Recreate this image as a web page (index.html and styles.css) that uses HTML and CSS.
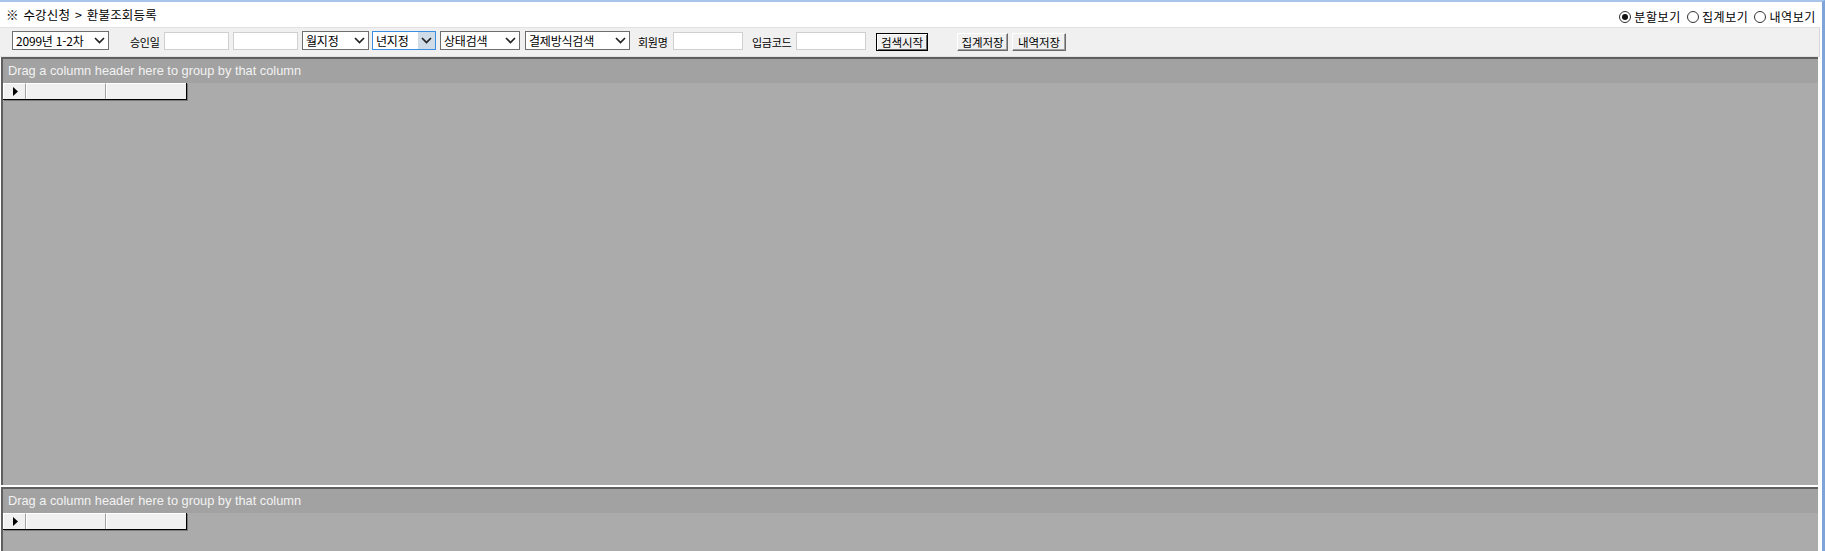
FILE: index.html
```html
<!DOCTYPE html>
<html lang="ko">
<head>
<meta charset="utf-8">
<title>환불조회등록</title>
<link rel="stylesheet" href="styles.css">
</head>
<body>
<div class="window">
  <div class="titlebar">
    <div class="title">※ 수강신청 &gt; 환불조회등록</div>
    <div class="views">
      <label class="radio"><span class="radio-circle checked"></span><span>분할보기</span></label>
      <label class="radio"><span class="radio-circle"></span><span>집계보기</span></label>
      <label class="radio"><span class="radio-circle"></span><span>내역보기</span></label>
    </div>
  </div>
  <div class="toolbar">
    <div class="sel sel-term"><span class="sel-text">2099년 1-2차</span><span class="sel-arrow"><svg width="11" height="7" viewBox="0 0 11 7"><path d="M1 1 L5.5 5.5 L10 1" fill="none" stroke="#222" stroke-width="1.7"/></svg></span></div>
    <span class="lbl lbl-approve">승인일</span>
    <span class="inp inp-date"></span>
    <span class="inp inp-date inp-date2"></span>
    <div class="sel sel-month"><span class="sel-text">월지정</span><span class="sel-arrow"><svg width="11" height="7" viewBox="0 0 11 7"><path d="M1 1 L5.5 5.5 L10 1" fill="none" stroke="#222" stroke-width="1.7"/></svg></span></div>
    <div class="sel sel-year focused"><span class="sel-text">년지정</span><span class="sel-arrow"><svg width="11" height="7" viewBox="0 0 11 7"><path d="M1 1 L5.5 5.5 L10 1" fill="none" stroke="#222" stroke-width="1.7"/></svg></span></div>
    <div class="sel sel-state"><span class="sel-text">상태검색</span><span class="sel-arrow"><svg width="11" height="7" viewBox="0 0 11 7"><path d="M1 1 L5.5 5.5 L10 1" fill="none" stroke="#222" stroke-width="1.7"/></svg></span></div>
    <div class="sel sel-pay"><span class="sel-text">결제방식검색</span><span class="sel-arrow"><svg width="11" height="7" viewBox="0 0 11 7"><path d="M1 1 L5.5 5.5 L10 1" fill="none" stroke="#222" stroke-width="1.7"/></svg></span></div>
    <span class="lbl lbl-member">회원명</span>
    <span class="inp inp-wide"></span>
    <span class="lbl lbl-code">입금코드</span>
    <span class="inp inp-wide"></span>
    <span class="btn btn-default btn-search">검색시작</span>
    <span class="btn btn-sum">집계저장</span>
    <span class="btn btn-detail">내역저장</span>
  </div>
  <div class="grids">
    <div class="grid grid-top">
      <div class="grid-group">Drag a column header here to group by that column</div>
      <div class="grid-header">
        <div class="hcell hcell-ind"><svg width="5" height="9" viewBox="0 0 5 9"><path d="M0 0 L5 4.5 L0 9 Z" fill="#000"/></svg></div>
        <div class="hcell hcell-col"></div>
        <div class="hcell hcell-col"></div>
      </div>
    </div>
    <div class="splitter"></div>
    <div class="grid grid-bottom">
      <div class="grid-group">Drag a column header here to group by that column</div>
      <div class="grid-header">
        <div class="hcell hcell-ind"><svg width="5" height="9" viewBox="0 0 5 9"><path d="M0 0 L5 4.5 L0 9 Z" fill="#000"/></svg></div>
        <div class="hcell hcell-col"></div>
        <div class="hcell hcell-col"></div>
      </div>
    </div>
  </div>
</div>
</body>
</html>
```
FILE: styles.css
```css
* { box-sizing: border-box; }
html, body { margin: 0; padding: 0; }
body {
  background: #ffffff;
  font-family: "Noto Sans CJK KR", "Liberation Sans", sans-serif;
  color: #000;
  overflow: hidden;
}
.window {
  width: 1825px;
  height: 551px;
  border-top: 2px solid #a9c5ec;
  border-right: 3px solid #7fa4d8;
  display: flex;
  flex-direction: column;
  overflow: hidden;
}
.titlebar {
  height: 25px;
  flex: 0 0 25px;
  display: flex;
  align-items: center;
  justify-content: space-between;
  padding-left: 6px;
  padding-right: 6px;
  background: #fff;
}
.title {
  font-size: 12.5px;
  letter-spacing: 0.2px;
  word-spacing: 1px;
  line-height: 16px;
  margin-top: 0;
}
.views {
  display: flex;
  gap: 6px;
  font-size: 12px;
  letter-spacing: 0.6px;
  margin-top: 5px;
}
.radio {
  display: flex;
  align-items: center;
  gap: 3px;
  line-height: 14px;
}
.radio-circle {
  width: 12px;
  height: 12px;
  border-radius: 50%;
  border: 1px solid #333;
  background: #fff;
  display: inline-flex;
  align-items: center;
  justify-content: center;
}
.radio-circle.checked::after {
  content: "";
  width: 6px;
  height: 6px;
  border-radius: 50%;
  background: #111;
}
.toolbar {
  height: 30px;
  flex: 0 0 30px;
  margin-right: 2px;
  background: #f0f0f0;
  border-top: 1px solid #e2e2e2;
  border-bottom: 1px solid #e2e2e2;
  border-right: 1px solid #d8d8d8;
  display: flex;
  align-items: flex-start;
  padding-top: 3px;
  font-size: 11px;
}
.sel {
  height: 19px;
  background: #fff;
  border: 1px solid #6e6e6e;
  display: flex;
  align-items: center;
  justify-content: space-between;
  padding-left: 3px;
  letter-spacing: -0.2px;
  line-height: 17px;
  font-size: 12px;
}
.sel-text { white-space: nowrap; }
.sel-arrow {
  width: 17px;
  height: 17px;
  flex: 0 0 17px;
  display: flex;
  align-items: center;
  justify-content: center;
}
.sel-term { width: 97px; margin-left: 12px; }
.sel-month { width: 67px; margin-left: 4px; }
.sel-year { width: 64px; margin-left: 3px; }
.sel-state { width: 80px; margin-left: 4px; }
.sel-pay { width: 105px; margin-left: 5px; }
.sel.focused { border-color: #3c8fe0; }
.sel.focused .sel-arrow { background: #cfdbe7; }
.lbl {
  height: 19px;
  line-height: 19px;
  margin-top: 2px;
  font-size: 11px;
  letter-spacing: -0.3px;
  white-space: nowrap;
}
.lbl-approve { width: 34px; margin-left: 21px; }
.lbl-member { width: 35px; margin-left: 8px; }
.lbl-code { width: 44px; margin-left: 9px; }
.inp {
  height: 18px;
  margin-top: 1px;
  background: #fff;
  border: 1px solid #cfcfcf;
}
.inp-date { width: 65px; }
.inp-date2 { margin-left: 4px; }
.inp-wide { width: 70px; }
.btn {
  height: 18px;
  margin-top: 2px;
  background: #f0f0f0;
  border-top: 1px solid #ffffff;
  border-left: 1px solid #ffffff;
  border-right: 1px solid #6a6a6a;
  border-bottom: 1px solid #6a6a6a;
  box-shadow: inset -1px -1px 0 #a0a0a0;
  display: flex;
  align-items: center;
  justify-content: center;
  font-size: 11.5px;
  letter-spacing: -0.1px;
  line-height: 16px;
}
.btn-default {
  border: 1px solid #000;
  box-shadow: inset 1px 1px 0 #fff, inset -1px -1px 0 #6a6a6a;
}
.btn-search { width: 52px; margin-left: 10px; }
.btn-sum { width: 51px; margin-left: 29px; }
.btn-detail { width: 54px; margin-left: 4px; }
.grids {
  flex: 1;
  display: flex;
  flex-direction: column;
  margin-right: 2px;
  border-right: 2px solid #ffffff;
  min-height: 0;
}
.grid {
  background: #ababab;
  border-top: 2px solid #5f5f5f;
  border-left: 2px solid #5f5f5f;
  margin-left: 1px;
}
.grid-top { height: 428px; flex: 0 0 428px; }
.grid-bottom { flex: 1; }
.splitter {
  height: 2px;
  flex: 0 0 2px;
  background: #ffffff;
}
.grid-group {
  height: 24px;
  background: #a2a2a2;
  color: #f2f2f2;
  font-family: "Liberation Sans", sans-serif;
  font-size: 12.8px;
  line-height: 24px;
  padding-left: 5px;
  white-space: nowrap;
}
.grid-header {
  display: flex;
  width: 184px;
  height: 17px;
  border-right: 1px solid #000;
  border-bottom: 1px solid #000;
  box-shadow: 1px 1px 0 #7a7a7a;
}
.hcell {
  height: 100%;
  background: #f0f0f0;
  border-top: 1px solid #fff;
  border-left: 1px solid #fff;
  border-right: 1px solid #a0a0a0;
}
.hcell:last-child { border-right: none; }
.hcell-ind {
  width: 23px;
  display: flex;
  align-items: center;
  justify-content: center;
  padding-left: 2px;
}
.hcell-col { width: 80px; }
```
